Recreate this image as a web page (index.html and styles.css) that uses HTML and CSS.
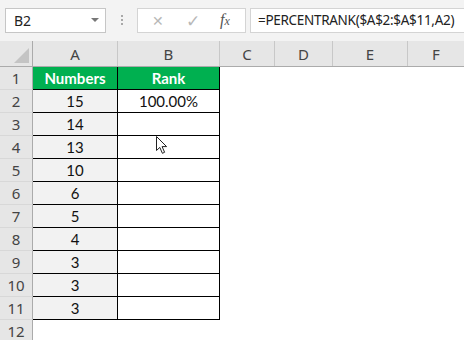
FILE: index.html
```html
<!DOCTYPE html>
<html lang="en">
<head>
    <meta charset="UTF-8">
    <title>PERCENTRANK - Sheet</title>
    <link rel="stylesheet" href="styles.css">
</head>
<body>
    <div class="formula-bar">
        <div class="name-box">
            <span>B2</span>
            <span class="drop"></span>
        </div>
        <div class="grip"><i></i><i></i><i></i></div>
        <div class="fx-buttons">
            <span class="btn-x">&#x2715;</span>
            <span class="btn-ok">&#x2713;</span>
            <span class="btn-fx">f<small>x</small></span>
        </div>
        <div class="formula-input">=PERCENTRANK($A$2:$A$11,A2)</div>
    </div>

    <div class="sheet">
        <div class="col-heads">
            <div class="corner"><span class="tri"></span></div>
            <div class="col-head">A</div>
            <div class="col-head">B</div>
            <div class="col-head">C</div>
            <div class="col-head">D</div>
            <div class="col-head">E</div>
            <div class="col-head last">F</div>
        </div>

        <div class="row">
            <div class="row-head">1</div>
            <div class="cell head">Numbers</div>
            <div class="cell head">Rank</div>
        </div>
        <div class="row">
            <div class="row-head">2</div>
            <div class="cell num">15</div>
            <div class="cell">100.00%</div>
        </div>
        <div class="row">
            <div class="row-head">3</div>
            <div class="cell num">14</div>
            <div class="cell"></div>
        </div>
        <div class="row">
            <div class="row-head">4</div>
            <div class="cell num">13</div>
            <div class="cell"></div>
        </div>
        <div class="row">
            <div class="row-head">5</div>
            <div class="cell num">10</div>
            <div class="cell"></div>
        </div>
        <div class="row">
            <div class="row-head">6</div>
            <div class="cell num">6</div>
            <div class="cell"></div>
        </div>
        <div class="row">
            <div class="row-head">7</div>
            <div class="cell num">5</div>
            <div class="cell"></div>
        </div>
        <div class="row">
            <div class="row-head">8</div>
            <div class="cell num">4</div>
            <div class="cell"></div>
        </div>
        <div class="row">
            <div class="row-head">9</div>
            <div class="cell num">3</div>
            <div class="cell"></div>
        </div>
        <div class="row">
            <div class="row-head">10</div>
            <div class="cell num">3</div>
            <div class="cell"></div>
        </div>
        <div class="row">
            <div class="row-head">11</div>
            <div class="cell num">3</div>
            <div class="cell"></div>
        </div>
        <div class="row">
            <div class="row-head">12</div>
        </div>

        <!-- mouse pointer over B4 -->
        <svg class="pointer" width="14" height="20" viewBox="0 0 14 20">
            <path d="M1.5 1.5 L1.5 15.5 L4.8 12.4 L7.4 18.3 L9.6 17.3 L7.1 11.6 L11.6 11.6 Z"
                  fill="#fff" stroke="#222" stroke-width="1" stroke-linejoin="round"/>
        </svg>
    </div>
</body>
</html>
```

FILE: styles.css
```css
:root {
    --bar-bg: #f3f3f3;
    --head-bg: #e6e6e6;
    --head-line: #c8c8c8;
    --head-text: #444;
    --green: #00b050;
    --grid: #000;
}

* {
    margin: 0;
    padding: 0;
    box-sizing: border-box;
}

body {
    width: 464px;
    height: 340px;
    overflow: hidden;
    background-color: #fff;
    font-family: 'Noto Sans', 'Open Sans', sans-serif;
}

/* formula bar */

.formula-bar {
    display: flex;
    align-items: center;
    height: 40px;
    padding: 0 0 0 5px;
    background-color: var(--bar-bg);
}

.formula-bar > * {
    flex-shrink: 0;
}

.name-box {
    display: flex;
    align-items: center;
    justify-content: space-between;
    width: 101px;
    height: 25px;
    padding: 0 6px 0 8px;
    background-color: #fff;
    border: 1px solid #c6c6c6;
    font-size: 14px;
    color: #222;
}

.drop {
    width: 0;
    height: 0;
    border-left: 4px solid transparent;
    border-right: 4px solid transparent;
    border-top: 4px solid #777;
}

.grip {
    display: flex;
    flex-direction: column;
    gap: 2px;
    width: 31px;
    align-items: center;
}

.grip i {
    width: 2px;
    height: 2px;
    background-color: #a8a8a8;
}

.fx-buttons {
    display: flex;
    align-items: center;
    width: 109px;
    height: 25px;
    background-color: #fff;
    border: 1px solid #d4d4d4;
    color: #b8b8b8;
}

.btn-x {
    margin-left: 14px;
    font-size: 14px;
}

.btn-ok {
    margin-left: 22px;
    font-size: 17px;
}

.btn-fx {
    margin-left: 20px;
    font-family: 'Liberation Serif', serif;
    font-style: italic;
    font-size: 16px;
    color: #555;
}

.btn-fx small {
    font-size: 12px;
}

.formula-input {
    flex: 1 1 0;
    min-width: 0;
    overflow: hidden;
    height: 25px;
    margin-left: 4px;
    padding: 0 0 0 7px;
    line-height: 23px;
    background-color: #fff;
    border: 1px solid #d4d4d4;
    border-right: none;
    font-size: 13.5px;
    letter-spacing: -0.3px;
    color: #222;
    white-space: nowrap;
}

/* grid */

.sheet {
    position: relative;
    border-top: 1px solid var(--bar-bg);
}

.col-heads {
    display: grid;
    grid-template-columns: 33px 85px 102px 55px 58px 75px 1fr;
    height: 26px;
    background-color: var(--head-bg);
    border-bottom: 1px solid #ababab;
}

.col-head {
    display: flex;
    align-items: center;
    justify-content: center;
    border-right: 1px solid var(--head-line);
    font-size: 15px;
    color: var(--head-text);
}

.col-head.last {
    border-right: none;
}

.corner {
    position: relative;
    border-right: 1px solid #ababab;
}

.tri {
    position: absolute;
    right: 3px;
    bottom: 3px;
    width: 0;
    height: 0;
    border-left: 15px solid transparent;
    border-bottom: 15px solid #c4c4c4;
}

.row {
    display: grid;
    grid-template-columns: 33px 85px 102px;
    height: 23px;
}

.row-head {
    display: flex;
    align-items: center;
    justify-content: center;
    background-color: var(--head-bg);
    border-right: 1px solid #ababab;
    border-bottom: 1px solid #d8d8d8;
    font-size: 15px;
    color: var(--head-text);
}

.cell {
    display: flex;
    align-items: center;
    justify-content: center;
    border-right: 1px solid var(--grid);
    border-bottom: 1px solid var(--grid);
    font-family: 'Lato', 'Liberation Sans', sans-serif;
    font-size: 15px;
    color: #111;
}

.cell.num {
    background-color: #f2f2f2;
}

.cell.head {
    background-color: var(--green);
    color: #fff;
    font-weight: bold;
}

.pointer {
    position: absolute;
    left: 155px;
    top: 94px;
}
```
